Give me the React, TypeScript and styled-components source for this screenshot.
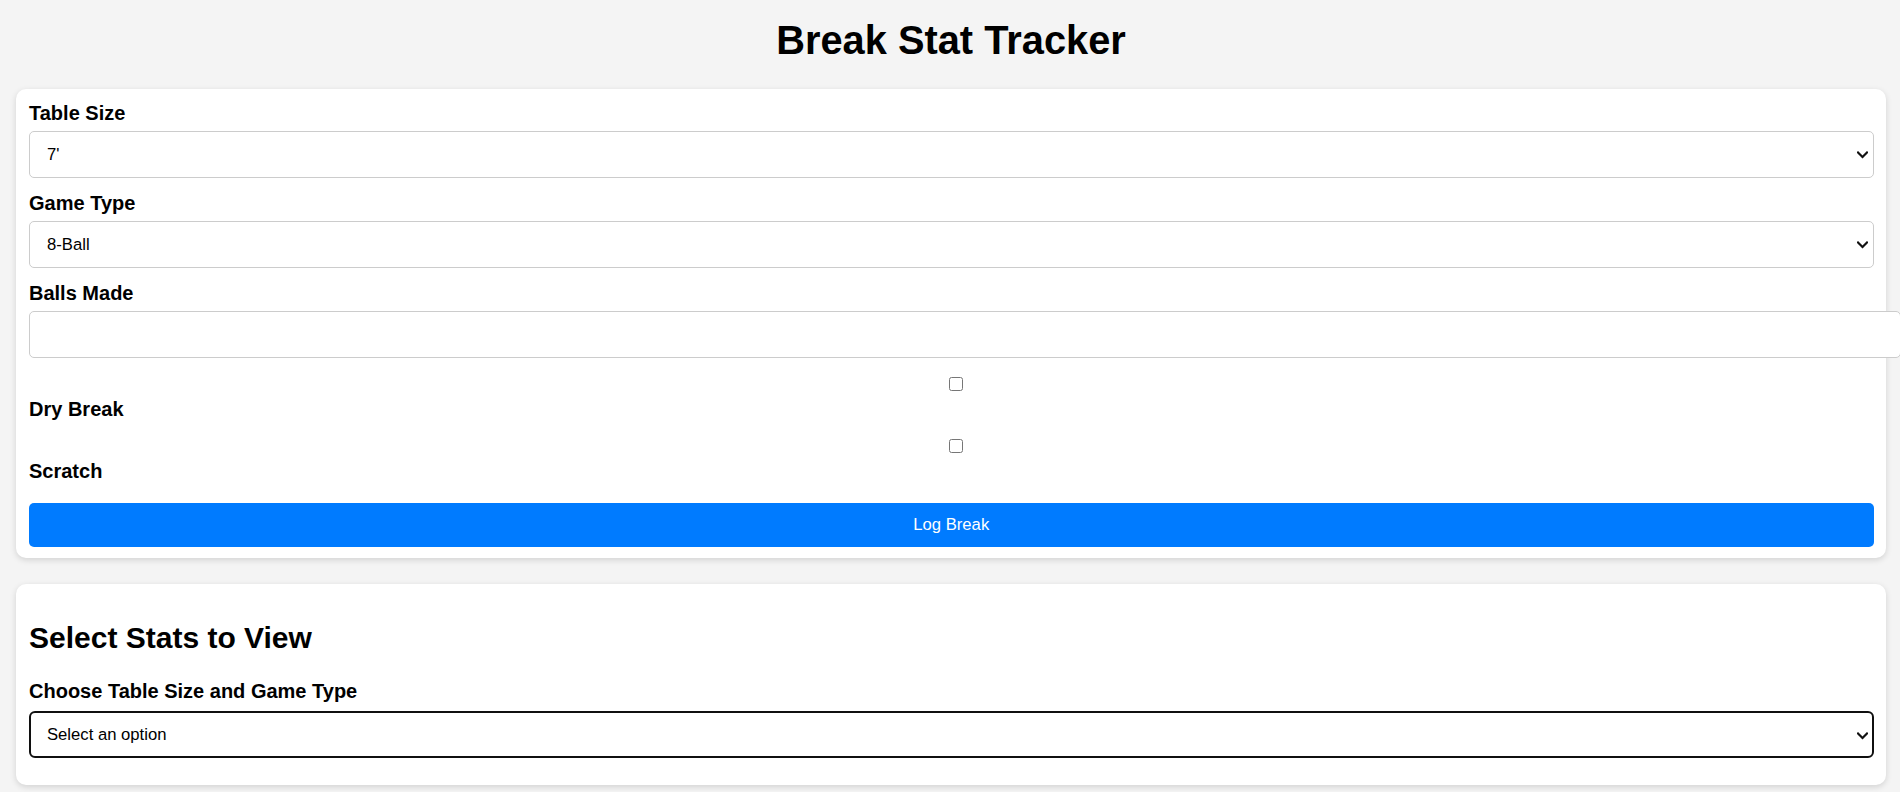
import React from "react";
import styled, { createGlobalStyle, css } from "styled-components";

const GlobalStyle = createGlobalStyle`
  html, body {
    margin: 0;
    padding: 0;
    background-color: #f4f4f4;
    font-family: "Liberation Sans", Arial, sans-serif;
    color: #000;
  }
  * {
    box-sizing: border-box;
  }
`;

const Wrapper = styled.div`
  padding: 0 14px 0 16px;
`;

const Title = styled.h1`
  margin: 18px 0 26px;
  font-size: 39.8px;
  line-height: 45px;
  font-weight: 700;
  text-align: center;
`;

const Card = styled.section`
  background-color: #fff;
  border-radius: 10px;
  padding: 12.5px 12.5px 11.5px 13px;
  margin-bottom: 26px;
  box-shadow: 0 2px 6px rgba(0, 0, 0, 0.14);
`;

const StatsCard = styled(Card)`
  padding-bottom: 12.5px;
`;

const SectionTitle = styled.h2`
  margin: 24.5px 0;
  font-size: 30px;
  line-height: 34.5px;
  font-weight: 700;
`;

const Label = styled.label`
  display: block;
  font-size: 20px;
  line-height: 22.8px;
  font-weight: 700;
  margin-bottom: 6.25px;
`;

const StatsLabel = styled(Label)`
  margin-bottom: 8px;
`;

const SelectBox = styled.div`
  position: relative;
  margin-bottom: 14px;
`;

const Select = styled.select<{ $focused?: boolean }>`
  appearance: none;
  display: block;
  width: 100%;
  height: 47px;
  padding: 0 40px 0 17px;
  border: 1px solid #ccc;
  border-radius: 5px;
  background-color: #fff;
  font-family: "Liberation Sans", Arial, sans-serif;
  font-size: 16.67px;
  color: #000;
  outline: none;
  ${(props) =>
    props.$focused &&
    css`
      border: 2px solid #101010;
      border-radius: 6px;
      padding-left: 16px;
    `}
`;

const Chevron = styled.svg`
  position: absolute;
  right: 6px;
  top: 50%;
  width: 11px;
  height: 8px;
  margin-top: -3px;
  pointer-events: none;
`;

const TextInput = styled.input`
  display: block;
  box-sizing: content-box;
  width: 100%;
  height: 20px;
  padding: 12.5px;
  border: 1px solid #ccc;
  border-radius: 5px;
  font-family: "Liberation Sans", Arial, sans-serif;
  font-size: 16.67px;
  margin: 0 0 13px;
`;

const CheckGroup = styled.div`
  display: flex;
  flex-direction: column;
  margin-bottom: 13px;
`;

const CheckCell = styled.div`
  display: flex;
  justify-content: center;
  padding-left: 10px;
  margin: 6px 0 7px;
`;

const Checkbox = styled.input`
  width: 14px;
  height: 14px;
  margin: 0;
`;

const CheckLabel = styled(Label)`
  margin-bottom: 0;
`;

const Button = styled.button`
  display: block;
  width: 100%;
  height: 44px;
  margin-top: 19.5px;
  border: none;
  border-radius: 5px;
  background-color: #007bff;
  color: #fff;
  font-family: "Liberation Sans", Arial, sans-serif;
  font-size: 16.67px;
  cursor: pointer;
`;

const ArrowIcon = () => (
  <Chevron viewBox="0 0 11 8">
    <path
      d="M1 1.5 L5.5 6 L10 1.5"
      fill="none"
      stroke="#111"
      strokeWidth="2.2"
      strokeLinecap="square"
    />
  </Chevron>
);

type SelectFieldProps = {
  id: string;
  options: string[];
  focused?: boolean;
};

const SelectField = ({ id, options, focused }: SelectFieldProps) => (
  <SelectBox>
    <Select id={id} $focused={focused} defaultValue={options[0]}>
      {options.map((opt) => (
        <option key={opt} value={opt}>
          {opt}
        </option>
      ))}
    </Select>
    <ArrowIcon />
  </SelectBox>
);

const CheckField = ({ id, text }: { id: string; text: string }) => (
  <CheckGroup>
    <CheckCell>
      <Checkbox type="checkbox" id={id} />
    </CheckCell>
    <CheckLabel htmlFor={id}>{text}</CheckLabel>
  </CheckGroup>
);

const App = () => {
  return (
    <Wrapper>
      <GlobalStyle />
      <Title>Break Stat Tracker</Title>
      <Card>
        <Label htmlFor="table-size">Table Size</Label>
        <SelectField id="table-size" options={["7'", "8'", "9'"]} />
        <Label htmlFor="game-type">Game Type</Label>
        <SelectField id="game-type" options={["8-Ball", "9-Ball", "10-Ball"]} />
        <Label htmlFor="balls-made">Balls Made</Label>
        <TextInput id="balls-made" type="number" />
        <CheckField id="dry-break" text="Dry Break" />
        <CheckField id="scratch" text="Scratch" />
        <Button type="button">Log Break</Button>
      </Card>
      <StatsCard>
        <SectionTitle>Select Stats to View</SectionTitle>
        <StatsLabel htmlFor="stats-select">Choose Table Size and Game Type</StatsLabel>
        <SelectField
          id="stats-select"
          focused
          options={["Select an option", "7' 8-Ball", "7' 9-Ball", "9' 8-Ball"]}
        />
      </StatsCard>
    </Wrapper>
  );
};

export default App;
